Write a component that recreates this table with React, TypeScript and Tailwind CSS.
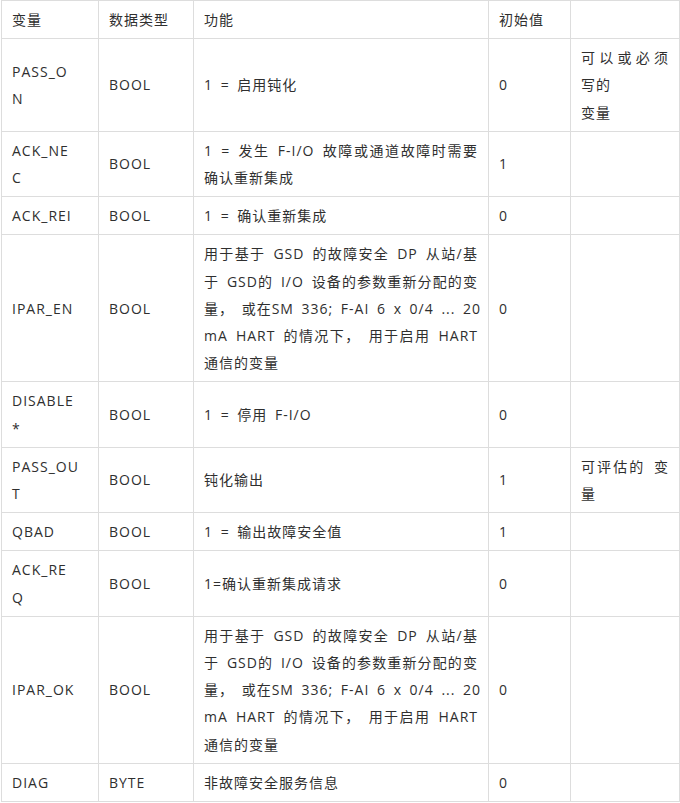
import React from "react";

type Row = { name: string[]; type: string; func: string[]; init: string; note?: string[]; noteJustify?: number };

// Lines are kept as in the source layout; wrapped lines are justified edge to edge.
const GSD_LINES = [
  "用于基于 GSD 的故障安全 DP 从站/基",
  "于 GSD的 I/O 设备的参数重新分配的变",
  "量， 或在SM 336; F-AI 6 x 0/4 ... 20",
  "mA HART 的情况下， 用于启用 HART",
  "通信的变量",
];

const ROWS: Row[] = [
  {
    name: ["PASS_O", "N"],
    type: "BOOL",
    func: ["1 = 启用钝化"],
    init: "0",
    note: ["可以或必须", "写的", "变量"],
    noteJustify: 1,
  },
  { name: ["ACK_NE", "C"], type: "BOOL", func: ["1 = 发生 F-I/O 故障或通道故障时需要", "确认重新集成"], init: "1" },
  { name: ["ACK_REI"], type: "BOOL", func: ["1 = 确认重新集成"], init: "0" },
  { name: ["IPAR_EN"], type: "BOOL", func: GSD_LINES, init: "0" },
  { name: ["DISABLE", "*"], type: "BOOL", func: ["1 = 停用 F-I/O"], init: "0" },
  { name: ["PASS_OU", "T"], type: "BOOL", func: ["钝化输出"], init: "1", note: ["可评估的 变", "量"], noteJustify: 1 },
  { name: ["QBAD"], type: "BOOL", func: ["1 = 输出故障安全值"], init: "1" },
  { name: ["ACK_RE", "Q"], type: "BOOL", func: ["1=确认重新集成请求"], init: "0" },
  { name: ["IPAR_OK"], type: "BOOL", func: GSD_LINES, init: "0" },
  { name: ["DIAG"], type: "BYTE", func: ["非故障安全服务信息"], init: "0" },
];

const cell = "border border-[#dddddd] px-[10px] py-[5px] align-middle text-left";

// justifyCount: how many leading lines are stretched to the full cell width
function Lines({ lines, justifyCount = 0 }: { lines: string[]; justifyCount?: number }) {
  return (
    <>
      {lines.map((l, i) => (
        <span
          key={i}
          className={
            i < justifyCount
              ? "block whitespace-nowrap text-justify [text-align-last:justify]"
              : "block whitespace-nowrap"
          }
        >
          {l}
        </span>
      ))}
    </>
  );
}

export default function App() {
  return (
    <div
      className="bg-white text-[#2f2f2f] text-[14px] leading-[27.2px] tracking-[1px] [word-spacing:3px]"
      style={{ fontFamily: '"Open Sans", "Noto Sans CJK SC", sans-serif' }}
    >
      <table className="ml-px w-[678px] table-fixed border-collapse">
        <colgroup>
          <col className="w-[97px]" />
          <col className="w-[95px]" />
          <col className="w-[295px]" />
          <col className="w-[82px]" />
          <col className="w-[109px]" />
        </colgroup>
        <thead>
          <tr>
            <th className={`${cell} font-normal`}>变量</th>
            <th className={`${cell} font-normal`}>数据类型</th>
            <th className={`${cell} font-normal`}>功能</th>
            <th className={`${cell} font-normal`}>初始值</th>
            <th className={`${cell} font-normal`}></th>
          </tr>
        </thead>
        <tbody>
          {ROWS.map((r) => (
            <tr key={r.name.join("")}>
              <td className={cell}>
                <Lines lines={r.name} />
              </td>
              <td className={cell}>{r.type}</td>
              <td className={cell}>
                <Lines lines={r.func} justifyCount={r.func.length - 1} />
              </td>
              <td className={cell}>{r.init}</td>
              <td className={cell}>{r.note && <Lines lines={r.note} justifyCount={r.noteJustify} />}</td>
            </tr>
          ))}
        </tbody>
      </table>
    </div>
  );
}
